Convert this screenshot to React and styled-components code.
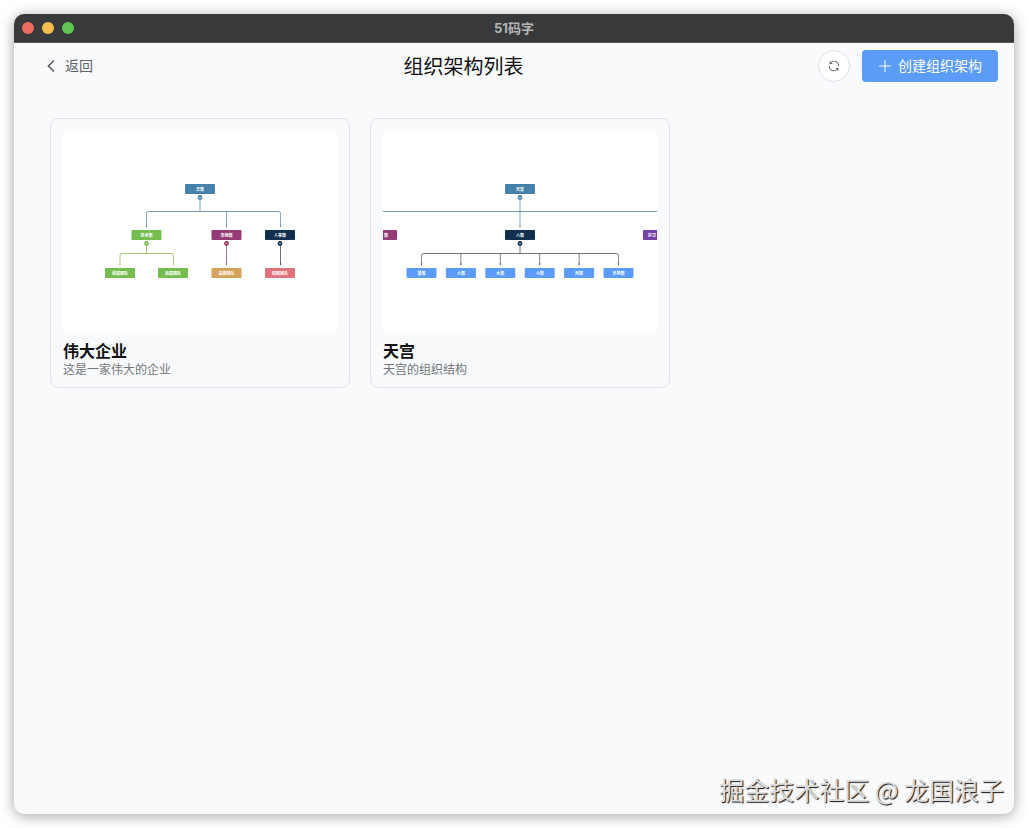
import React from 'react'
import styled, { createGlobalStyle } from 'styled-components'

const GlobalStyle = createGlobalStyle`
    * {
        box-sizing: border-box;
    }
    body {
        margin: 0;
        background-color: #fff;
        font-family: 'Liberation Sans', 'Noto Sans CJK SC', sans-serif;
    }
`

const Desktop = styled.div`
    display: flex;
    min-height: 100vh;
    padding: 14px;
`

const Window = styled.div`
    position: relative;
    flex: 1;
    display: flex;
    flex-direction: column;
    overflow: hidden;
    background-color: #f9fafc;
    border-radius: 10px;
    box-shadow: 0 2px 14px rgba(0, 0, 0, 0.36);
`

const TitleBar = styled.div`
    display: grid;
    grid-template-columns: 1fr auto 1fr;
    align-items: center;
    height: 29px;
    padding: 0 8px;
    background-color: #38393a;
    border-bottom: 1px solid #58595a;
`

const Lights = styled.div`
    display: flex;
    gap: 8px;
`

const Light = styled.span`
    width: 12px;
    height: 12px;
    border-radius: 50%;
    background-color: ${props => props.$color};
`

const AppName = styled.div`
    font-family: Inter, 'Noto Sans CJK SC', sans-serif;
    font-size: 13px;
    font-weight: bold;
    line-height: 26px;
    color: #b4b5b5;
`

const Header = styled.header`
    display: flex;
    justify-content: space-between;
    align-items: center;
    height: 46px;
    padding: 0 16px 0 32px;
`

const BackButton = styled.button`
    display: flex;
    align-items: center;
    gap: 8px;
    padding: 0 16px 0 0;
    border: none;
    background: none;
    font-family: inherit;
    font-size: 14px;
    line-height: 24px;
    color: #606266;
    cursor: pointer;
`

const PageTitle = styled.h1`
    margin: 0;
    font-family: 'Noto Sans CJK SC', sans-serif;
    font-size: 20px;
    font-weight: normal;
    line-height: 32px;
    color: #111;
`

const Actions = styled.div`
    display: flex;
    gap: 12px;
`

const RefreshButton = styled.button`
    display: flex;
    align-items: center;
    justify-content: center;
    width: 32px;
    height: 32px;
    padding: 0;
    border: 1px solid #dcdfe6;
    border-radius: 50%;
    background-color: #fff;
    color: #606266;
    cursor: pointer;
`

const CreateButton = styled.button`
    display: flex;
    align-items: center;
    gap: 6px;
    height: 32px;
    padding: 0 16px;
    border: none;
    border-radius: 4px;
    background-color: #5a9cf8;
    font-family: inherit;
    font-size: 14px;
    line-height: 20px;
    color: #fff;
    cursor: pointer;
`

const List = styled.main`
    display: flex;
    flex-wrap: wrap;
    align-items: flex-start;
    gap: 20px;
    padding: 29px 36px;
`

const Card = styled.article`
    width: 300px;
    padding: 13px 12px 10px;
    border: 1px solid #e1e3e7;
    border-radius: 8px;
`

const Preview = styled.svg`
    display: block;
    width: 100%;
    height: 200px;
    border-radius: 4px;
    background-color: #fff;
`

const CardTitle = styled.h2`
    margin: 9px 0 0;
    font-size: 16px;
    font-weight: bold;
    line-height: 22px;
    color: #111;
`

const CardText = styled.p`
    margin: 0;
    font-size: 12px;
    line-height: 14px;
    color: #73767a;
`

const Watermark = styled.div`
    position: absolute;
    right: 10px;
    bottom: 7px;
    font-family: 'Noto Sans CJK SC', sans-serif;
    font-size: 25px;
    line-height: 36px;
    color: #dcdcdc;
    text-shadow: 1px 1px 1px #111;
`

const Label = styled.text`
    font-family: 'Noto Sans CJK SC', sans-serif;
    font-size: 4px;
    font-weight: bold;
    text-anchor: middle;
    fill: #fff;
`

const Node = ({ x, y, color, text, labelX = x }) => (
    <g>
        <rect x={x - 15} y={y} width="30" height="10" rx="1" fill={color} />
        <Label x={labelX} y={y + 6.5}>{text}</Label>
    </g>
)

const Toggle = ({ x, y, color }) => (
    <g>
        <circle cx={x} cy={y} r="2.4" fill={color} />
        <path d={`M${x - 1.2} ${y}h2.4`} stroke="#fff" strokeWidth="0.6" />
    </g>
)

const Drop = ({ x, y, to, color }) => (
    <g>
        <path d={`M${x} ${y}V${to}`} fill="none" stroke={color} strokeWidth="0.7" />
        <path d={`M${x - 0.8} ${to - 1.4}h1.6l-0.8 1.8z`} fill={color} />
    </g>
)

// bracket from a parent at px down to its children
const Branch = ({ px, from, y, to, xs, color }) => {
    const first = xs[0]
    const last = xs[xs.length - 1]
    return (
        <g>
            <path
                d={`M${px} ${from}V${y}M${first} ${y + 2}Q${first} ${y} ${first + 2} ${y}H${last - 2}Q${last} ${y} ${last} ${y + 2}`}
                fill="none"
                stroke={color}
                strokeWidth="0.8"
            />
            {xs.map((x, i) => (
                <Drop key={x} x={x} y={i === 0 || i === xs.length - 1 ? y + 2 : y} to={to} color={color} />
            ))}
        </g>
    )
}

const CompanyChart = () => (
    <Preview viewBox="0 0 274 200" role="img" aria-label="伟大企业">
        <Branch px={137} from={66} y={79.5} to={95} xs={[83.5, 163.5, 217.5]} color="#5484a3" />
        <Branch px={83.5} from={112} y={121.5} to={133} xs={[57, 110.5]} color="#8cb84e" />
        <Drop x={163.5} y={112} to={133} color="#96405f" />
        <Drop x={217.5} y={112} to={133} color="#26354a" />
        <Node x={137} y={52} color="#4482a9" text="总部" />
        <Toggle x={137} y={65.5} color="#4482a9" />
        <Node x={83.5} y={98} color="#76bd4f" text="技术部" />
        <Toggle x={83.5} y={111.5} color="#76bd4f" />
        <Node x={163.5} y={98} color="#933c76" text="市场部" />
        <Toggle x={163.5} y={111.5} color="#993459" />
        <Node x={217} y={98} color="#10304f" text="人事部" />
        <Toggle x={217} y={111.5} color="#10304f" />
        <Node x={57} y={136} color="#76bd4f" text="前端团队" />
        <Node x={110} y={136} color="#76bd4f" text="后端团队" />
        <Node x={163.5} y={136} color="#d6a158" text="品牌团队" />
        <Node x={217} y={136} color="#e0717b" text="招聘团队" />
    </Preview>
)

const leaves = ['雷部', '火部', '水部', '斗部', '风部', '天将部']

const HeavenChart = () => (
    <Preview viewBox="0 0 274 200" role="img" aria-label="天宫">
        <path d="M0 79.5H274" stroke="#5484a3" strokeWidth="0.8" />
        <Drop x={137} y={66} to={95} color="#5484a3" />
        <Branch
            px={137}
            from={112}
            y={121.5}
            to={133}
            xs={leaves.map((_, i) => 38.5 + i * 39.4)}
            color="#4a4f57"
        />
        <Node x={137} y={52} color="#4482a9" text="天宫" />
        <Toggle x={137} y={65.5} color="#4482a9" />
        <Node x={-1} y={98} color="#933c76" text="部" labelX={3} />
        <Node x={275} y={98} color="#7543a6" text="护卫" labelX={269} />
        <Node x={137} y={98} color="#10304f" text="八部" />
        <Toggle x={137} y={111.5} color="#10304f" />
        {leaves.map((text, i) => (
            <Node key={text} x={38.5 + i * 39.4} y={136} color="#5a9cf8" text={text} />
        ))}
    </Preview>
)

const charts = [
    { title: '伟大企业', text: '这是一家伟大的企业', Chart: CompanyChart },
    { title: '天宫', text: '天宫的组织结构', Chart: HeavenChart },
]

const ArrowIcon = () => (
    <svg width="11" height="14" viewBox="0 0 11 14" fill="none" stroke="currentColor" strokeWidth="1.7">
        <path d="M8 1.5L2.5 7L8 12.5" />
    </svg>
)

const RefreshIcon = () => (
    <svg width="14" height="14" viewBox="0 0 1024 1024" fill="currentColor">
        <path d="M771.776 794.88A384 384 0 0 1 128 512h64a320 320 0 0 0 555.712 216.448H654.72a32 32 0 1 1 0-64h149.056a32 32 0 0 1 32 32v148.928a32 32 0 1 1-64 0v-50.56zM276.288 295.616h92.992a32 32 0 0 1 0 64H220.16a32 32 0 0 1-32-32V178.56a32 32 0 0 1 64 0v50.56A384 384 0 0 1 896.128 512h-64a320 320 0 0 0-555.776-216.384z" />
    </svg>
)

const PlusIcon = () => (
    <svg width="14" height="14" viewBox="0 0 14 14" fill="none" stroke="currentColor" strokeLinecap="round">
        <path d="M7 1.5v11M1.5 7h11" />
    </svg>
)

const App = () => {
  return (
    <Desktop>
        <GlobalStyle />
        <Window>
            <TitleBar>
                <Lights>
                    <Light $color="#ed6a5f" />
                    <Light $color="#f5bf4f" />
                    <Light $color="#61c554" />
                </Lights>
                <AppName>51码字</AppName>
            </TitleBar>
            <Header>
                <BackButton type="button"><ArrowIcon />返回</BackButton>
                <PageTitle>组织架构列表</PageTitle>
                <Actions>
                    <RefreshButton type="button" aria-label="刷新"><RefreshIcon /></RefreshButton>
                    <CreateButton type="button"><PlusIcon />创建组织架构</CreateButton>
                </Actions>
            </Header>
            <List>
                {charts.map(({ title, text, Chart }) => (
                    <Card key={title}>
                        <Chart />
                        <CardTitle>{title}</CardTitle>
                        <CardText>{text}</CardText>
                    </Card>
                ))}
            </List>
            <Watermark>掘金技术社区 @ 龙国浪子</Watermark>
        </Window>
    </Desktop>
  )
}

export default App
